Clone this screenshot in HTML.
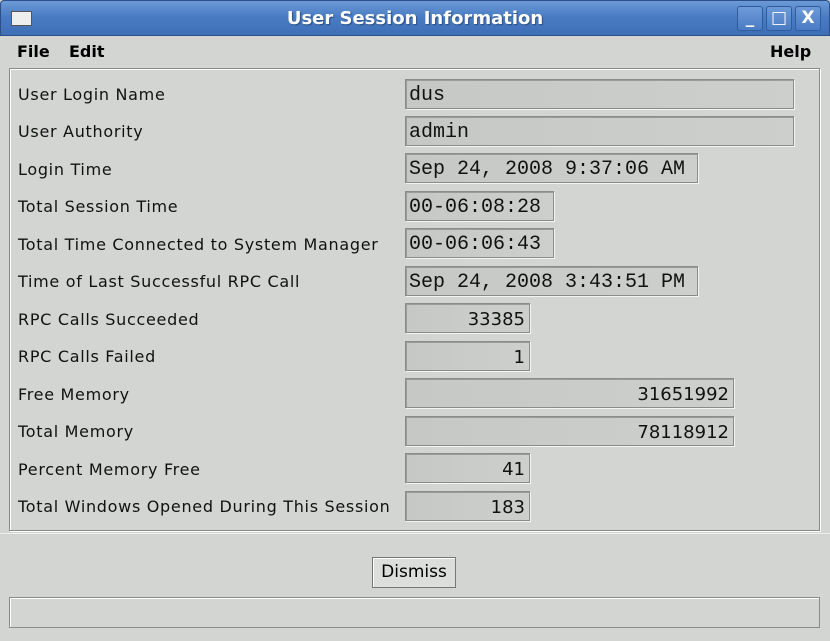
<!DOCTYPE html>
<html><head><meta charset="utf-8"><style>
*{margin:0;padding:0;box-sizing:border-box}
body{width:830px;height:641px;overflow:hidden;background:#d3d5d3;font-family:"DejaVu Sans","Liberation Sans",sans-serif;position:relative}
.title{position:absolute;left:0;top:0;width:830px;height:36px;background:linear-gradient(#6b9ad6,#4a7cc4 45%,#3e6fb6);border:1px solid #2b4f86;border-radius:4px 4px 0 0}
.title .t{position:absolute;left:0;right:0;top:7px;text-align:center;color:#fff;font-weight:bold;font-size:18px;text-shadow:1px 1px 1px #2a4b80}
.ico{position:absolute;left:10px;top:10px;width:21px;height:15px;background:#eee;border:1px solid #555}
.wb{position:absolute;top:6px;width:26px;height:25px;border:1px solid #2f5c9c;border-radius:3px;background:linear-gradient(#6d9bd8,#4a7cc4);color:#fff;font-weight:bold;text-align:center;font-size:17px;line-height:23px}
.menu{position:absolute;top:42px;font-weight:bold;font-size:16px}
.panel{position:absolute;left:9px;top:68px;width:811px;height:463px;border:1px solid #8a8c8a;box-shadow:inset 1px 1px 0 #fff,1px 1px 0 #fff}
.lab{position:absolute;left:18px;font-size:16px;letter-spacing:0.7px;color:#111;margin-top:1px}
.f{position:absolute;left:405px;height:30px;background:linear-gradient(90deg,#c6c8c6,#cdcfcd);border:1px solid #8a8c8a;box-shadow:inset 1px 1px 0 #9a9c9a,1px 1px 0 #f4f4f4;font-size:18px;line-height:31px;padding:0 3px;color:#111}
.m{font-family:"Liberation Mono","DejaVu Sans Mono",monospace;font-size:20px}
.n{text-align:right;padding-right:4px}
.btn{position:absolute;left:372px;top:557px;width:84px;height:31px;border:1px solid #777;box-shadow:inset 1px 1px 0 #fff;background:#dcdedc;font-size:17px;text-align:center;line-height:29px}
.status{position:absolute;left:9px;top:597px;width:811px;height:31px;border:1px solid #8a8c8a;box-shadow:inset 1px 1px 0 #fff}
.sep{position:absolute;left:0;top:533px;width:830px;height:1px;background:#eee}
</style></head><body>
<div class="title"><div class="ico"></div><div class="t">User Session Information</div></div>
<div class="wb" style="left:737px">_</div>
<div class="wb" style="left:766px">□</div>
<div class="wb" style="left:795px">X</div>
<div class="menu" style="left:17px">File</div>
<div class="menu" style="left:69px">Edit</div>
<div class="menu" style="left:770px">Help</div>
<div class="panel"></div>
<div class="lab" style="top:84px">User Login Name</div>
<div class="lab" style="top:121px">User Authority</div>
<div class="lab" style="top:159px">Login Time</div>
<div class="lab" style="top:196px">Total Session Time</div>
<div class="lab" style="top:234px">Total Time Connected to System Manager</div>
<div class="lab" style="top:271px">Time of Last Successful RPC Call</div>
<div class="lab" style="top:309px">RPC Calls Succeeded</div>
<div class="lab" style="top:346px">RPC Calls Failed</div>
<div class="lab" style="top:384px">Free Memory</div>
<div class="lab" style="top:421px">Total Memory</div>
<div class="lab" style="top:459px">Percent Memory Free</div>
<div class="lab" style="top:496px">Total Windows Opened During This Session</div>
<div class="f m" style="top:79px;width:389px">dus</div>
<div class="f m" style="top:116px;width:389px">admin</div>
<div class="f m" style="top:153px;width:293px">Sep 24, 2008 9:37:06 AM</div>
<div class="f m" style="top:191px;width:149px">00-06:08:28</div>
<div class="f m" style="top:228px;width:149px">00-06:06:43</div>
<div class="f m" style="top:266px;width:293px">Sep 24, 2008 3:43:51 PM</div>
<div class="f n" style="top:303px;width:125px">33385</div>
<div class="f n" style="top:341px;width:125px">1</div>
<div class="f n" style="top:378px;width:329px">31651992</div>
<div class="f n" style="top:416px;width:329px">78118912</div>
<div class="f n" style="top:453px;width:125px">41</div>
<div class="f n" style="top:491px;width:125px">183</div>
<div class="sep"></div>
<div class="btn">Dismiss</div>
<div class="status"></div>
</body></html>
